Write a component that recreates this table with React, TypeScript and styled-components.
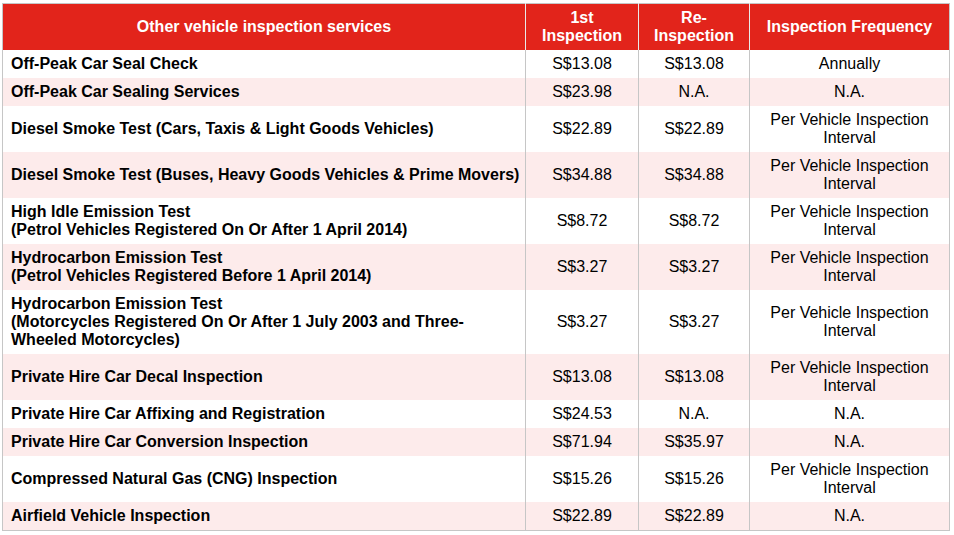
import React from 'react';
import styled, { createGlobalStyle } from 'styled-components';

const GlobalStyle = createGlobalStyle`
  body {
    margin: 0;
    background: #ffffff;
    font-family: 'Liberation Sans', Arial, sans-serif;
  }
`;

const Page = styled.div`
  padding: 3px 0 0 2px;
`;

const Table = styled.table`
  width: 948px;
  border-collapse: collapse;
  table-layout: fixed;
  border: 1px solid #c6c6c6;
  font-size: 16px;
  line-height: normal;
  color: #000;
`;

const HeadCell = styled.th`
  background: #e2241b;
  color: #ffffff;
  font-weight: bold;
  text-align: center;
  padding: 5px 6px;
  border-left: 1px solid #e9e9e9;
  &:first-child {
    border-left: none;
  }
`;

const Row = styled.tr<{ $shaded: boolean }>`
  background: ${(p) => (p.$shaded ? '#fdebeb' : '#ffffff')};
`;

const NameCell = styled.td`
  font-weight: bold;
  text-align: left;
  white-space: nowrap;
  padding: 5px 2px 5px 8px;
  border-right: 1px solid #c6c6c6;
`;

const ValueCell = styled.td`
  text-align: center;
  padding: 5px 6px;
  border-right: 1px solid #c6c6c6;
  &:last-child {
    border-right: none;
  }
`;

type Service = {
  name: React.ReactNode;
  first: string;
  re: string;
  freq: React.ReactNode;
};

const perInterval = (
  <>
    Per Vehicle Inspection
    <br />
    Interval
  </>
);

const services: Service[] = [
  { name: 'Off-Peak Car Seal Check', first: 'S$13.08', re: 'S$13.08', freq: 'Annually' },
  { name: 'Off-Peak Car Sealing Services', first: 'S$23.98', re: 'N.A.', freq: 'N.A.' },
  {
    name: 'Diesel Smoke Test (Cars, Taxis & Light Goods Vehicles)',
    first: 'S$22.89',
    re: 'S$22.89',
    freq: perInterval,
  },
  {
    name: 'Diesel Smoke Test (Buses, Heavy Goods Vehicles & Prime Movers)',
    first: 'S$34.88',
    re: 'S$34.88',
    freq: perInterval,
  },
  {
    name: (
      <>
        High Idle Emission Test
        <br />
        (Petrol Vehicles Registered On Or After 1 April 2014)
      </>
    ),
    first: 'S$8.72',
    re: 'S$8.72',
    freq: perInterval,
  },
  {
    name: (
      <>
        Hydrocarbon Emission Test
        <br />
        (Petrol Vehicles Registered Before 1 April 2014)
      </>
    ),
    first: 'S$3.27',
    re: 'S$3.27',
    freq: perInterval,
  },
  {
    name: (
      <>
        Hydrocarbon Emission Test
        <br />
        (Motorcycles Registered On Or After 1 July 2003 and Three-
        <br />
        Wheeled Motorcycles)
      </>
    ),
    first: 'S$3.27',
    re: 'S$3.27',
    freq: perInterval,
  },
  { name: 'Private Hire Car Decal Inspection', first: 'S$13.08', re: 'S$13.08', freq: perInterval },
  { name: 'Private Hire Car Affixing and Registration', first: 'S$24.53', re: 'N.A.', freq: 'N.A.' },
  { name: 'Private Hire Car Conversion Inspection', first: 'S$71.94', re: 'S$35.97', freq: 'N.A.' },
  {
    name: 'Compressed Natural Gas (CNG) Inspection',
    first: 'S$15.26',
    re: 'S$15.26',
    freq: perInterval,
  },
  { name: 'Airfield Vehicle Inspection', first: 'S$22.89', re: 'S$22.89', freq: 'N.A.' },
];

const App = () => {
  return (
    <>
      <GlobalStyle />
      <Page>
        <Table>
          <colgroup>
            <col style={{ width: 523 }} />
            <col style={{ width: 113 }} />
            <col style={{ width: 111 }} />
            <col style={{ width: 200 }} />
          </colgroup>
          <thead>
            <tr>
              <HeadCell>Other vehicle inspection services</HeadCell>
              <HeadCell>
                1st
                <br />
                Inspection
              </HeadCell>
              <HeadCell>
                Re-
                <br />
                Inspection
              </HeadCell>
              <HeadCell>Inspection Frequency</HeadCell>
            </tr>
          </thead>
          <tbody>
            {services.map((s, i) => (
              <Row key={i} $shaded={i % 2 === 1}>
                <NameCell>{s.name}</NameCell>
                <ValueCell>{s.first}</ValueCell>
                <ValueCell>{s.re}</ValueCell>
                <ValueCell>{s.freq}</ValueCell>
              </Row>
            ))}
          </tbody>
        </Table>
      </Page>
    </>
  );
};

export default App;
